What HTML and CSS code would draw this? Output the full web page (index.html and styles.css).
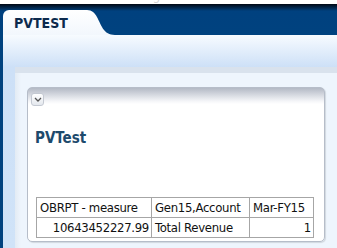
FILE: index.html
```html
<!DOCTYPE html>
<html lang="en">
<head>
  <meta charset="UTF-8" />
  <title>PVTEST</title>
  <link rel="stylesheet" href="styles.css">
</head>
<body>

<!-- window title, mostly scrolled off -->
<div class="topline"><span>Oracle Planning</span></div>

<!-- tab strip -->
<div class="tabbar">
  <div class="tab">
    <span class="tab-label">PVTEST</span>
    <svg class="tab-curve" width="34" height="25" viewBox="0 0 34 25">
      <defs>
        <linearGradient id="tabfill" x1="0" y1="0" x2="0" y2="1">
          <stop offset="0" stop-color="#ffffff"/>
          <stop offset="1" stop-color="#f2f7fd"/>
        </linearGradient>
      </defs>
      <path d="M0 0 L4 0 C14 0 15 12 21 20 C24 24 28 25 34 25 L0 25 Z" fill="url(#tabfill)"/>
    </svg>
  </div>
</div>

<div class="main">
  <div class="content">
    <div class="panel">
      <div class="panel-head">
        <button class="collapse" type="button">
          <svg width="8" height="5" viewBox="0 0 8 5"><path d="M1 1 L4 4 L7 1" fill="none" stroke="#555" stroke-width="1.3"/></svg>
        </button>
      </div>
      <h2 class="panel-title">PVTest</h2>
      <table class="grid">
        <colgroup>
          <col class="c1"><col class="c2"><col class="c3">
        </colgroup>
        <tr>
          <td>OBRPT - measure</td>
          <td>Gen15,Account</td>
          <td>Mar-FY15</td>
        </tr>
        <tr>
          <td class="num">10643452227.99</td>
          <td>Total Revenue</td>
          <td class="num">1</td>
        </tr>
      </table>
    </div>
  </div>
</div>

</body>
</html>
```

FILE: styles.css
```css
html, body {
  margin: 0;
  padding: 0;
}

body {
  width: 337px;
  height: 248px;
  overflow: hidden;
  background: #eef5fd;
  font-family: "DejaVu Sans Condensed", "DejaVu Sans", "Liberation Sans", sans-serif;
}

.topline {
  height: 4px;
  overflow: hidden;
  background: #fff;
  padding-left: 68px;
}

.topline span {
  display: block;
  margin-top: -11px;
  font-size: 13px;
  line-height: 14px;
  color: #d4d4d4;
}

.tabbar {
  height: 31px;
  box-sizing: border-box;
  padding: 6px 0 0 3px;
  background: linear-gradient(#000814, #00417f 7px, #00427f);
  display: flex;
  align-items: flex-end;
}

.tab {
  display: flex;
  align-items: flex-end;
  height: 25px;
}

.tab-label {
  display: flex;
  align-items: center;
  height: 25px;
  box-sizing: border-box;
  padding: 0 0 0 11px;
  width: 80px;
  background: linear-gradient(#ffffff, #f2f7fd);
  border-top-left-radius: 6px;
  font-weight: bold;
  font-size: 14px;
  color: #0c2a4d;
}

.tab-curve {
  display: block;
}

.main {
  border-left: 3px solid #00427f;
  height: 213px;
  background: linear-gradient(#f7fbff, #cde0f7 32px, #d0e3f8);
  display: flex;
  flex-direction: column;
}

.content {
  flex: 1;
  margin: 32px 0 0 12px;
  border-top: 6px solid #d9e2ed;
  background: linear-gradient(to right, #e3ebf4, #eef5fd 6px);
  padding: 14px 12px 0 12px;
}

.panel {
  width: 298px;
  height: 155px;
  box-sizing: border-box;
  border: 1px solid #b6bdc9;
  border-radius: 5px;
  background: linear-gradient(#b3b9c5, #f4f5f8 13px, #ffffff 16px);
  box-shadow: 1px 1px 1px rgba(0, 0, 0, 0.12);
  display: flex;
  flex-direction: column;
}

.panel-head {
  padding: 5px 0 0 3px;
  height: 13px;
}

.collapse {
  width: 13px;
  height: 13px;
  padding: 0;
  border: 1px solid #c4c9d2;
  border-radius: 3px;
  background: linear-gradient(#ffffff, #e4e8ee);
  display: flex;
  align-items: center;
  justify-content: center;
}

.panel-title {
  margin: 23px 0 0 7px;
  font-size: 15px;
  line-height: 18px;
  font-weight: bold;
  color: #1d4a6c;
}

.grid {
  margin: 50px 0 0 8px;
  width: 277px;
  table-layout: fixed;
  border-collapse: collapse;
  font-size: 13px;
  letter-spacing: -0.3px;
  color: #111;
}

.grid col.c1 { width: 115px; }
.grid col.c2 { width: 98px; }
.grid col.c3 { width: 64px; }

.grid td {
  border: 1px solid #a6a6a6;
  height: 19px;
  padding: 0 2px 0 3px;
  line-height: 18px;
  white-space: nowrap;
  overflow: hidden;
}

.grid .num {
  text-align: right;
}
```
